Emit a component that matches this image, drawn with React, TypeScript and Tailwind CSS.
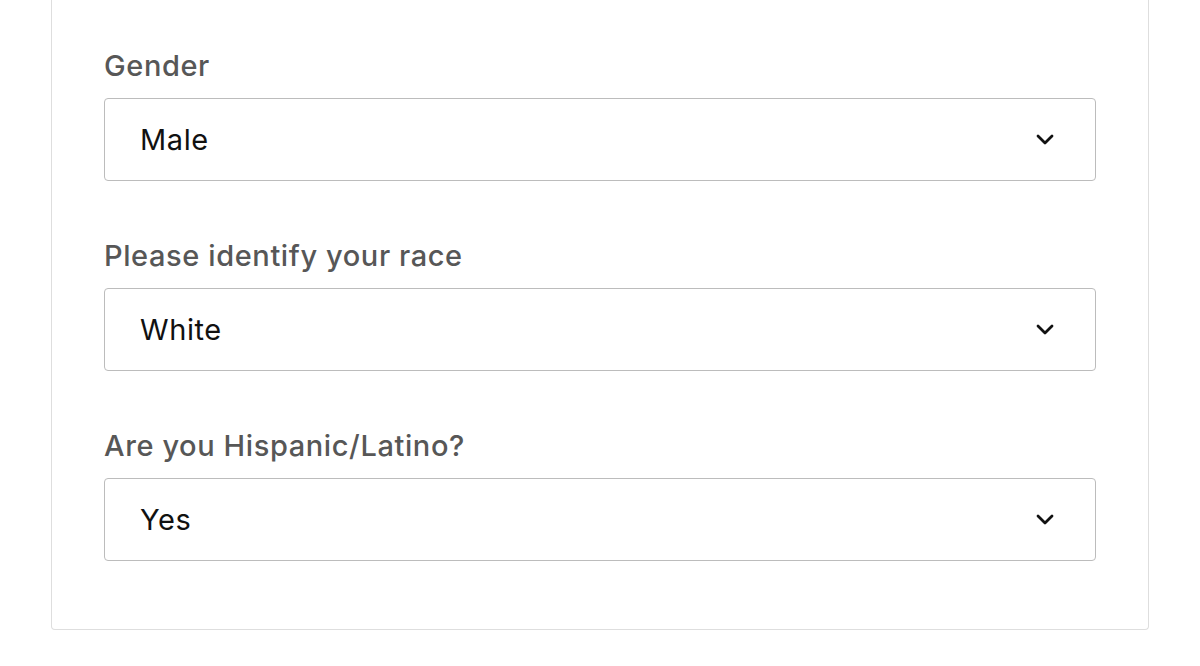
import React from "react";

function Chevron() {
  return (
    <svg width="18" height="11" viewBox="0 0 18 11" fill="none" className="shrink-0">
      <path d="M2 2l7 7 7-7" stroke="#111" strokeWidth="2.8" strokeLinecap="round" strokeLinejoin="round" />
    </svg>
  );
}

function Field({ label, value, first }: { label: string; value: string; first?: boolean }) {
  return (
    <div className={first ? "" : "mt-[59px]"}>
      <div className="text-[29px] leading-[32px] font-medium text-[#575757] tracking-[0.6px]">{label}</div>
      <div className="mt-4 h-[83px] rounded-[4px] border border-[#bcbcbc] bg-white flex items-center justify-between pl-[35px] pr-[41px]">
        <span className="text-[29px] leading-[32px] text-[#111] tracking-[0.6px]">{value}</span>
        <Chevron />
      </div>
    </div>
  );
}

export default function App() {
  return (
    <div className="w-[1200px] h-[666px] bg-white overflow-hidden" style={{ fontFamily: "Inter, 'Liberation Sans', Arial, sans-serif" }}>
      <div className="ml-[51px] w-[1098px] border-x border-b border-[#dedede] rounded-b-[4px] pt-[50px] pb-[68px] px-[52px]">
        <Field label="Gender" value="Male" first />
        <Field label="Please identify your race" value="White" />
        <Field label="Are you Hispanic/Latino?" value="Yes" />
      </div>
    </div>
  );
}
